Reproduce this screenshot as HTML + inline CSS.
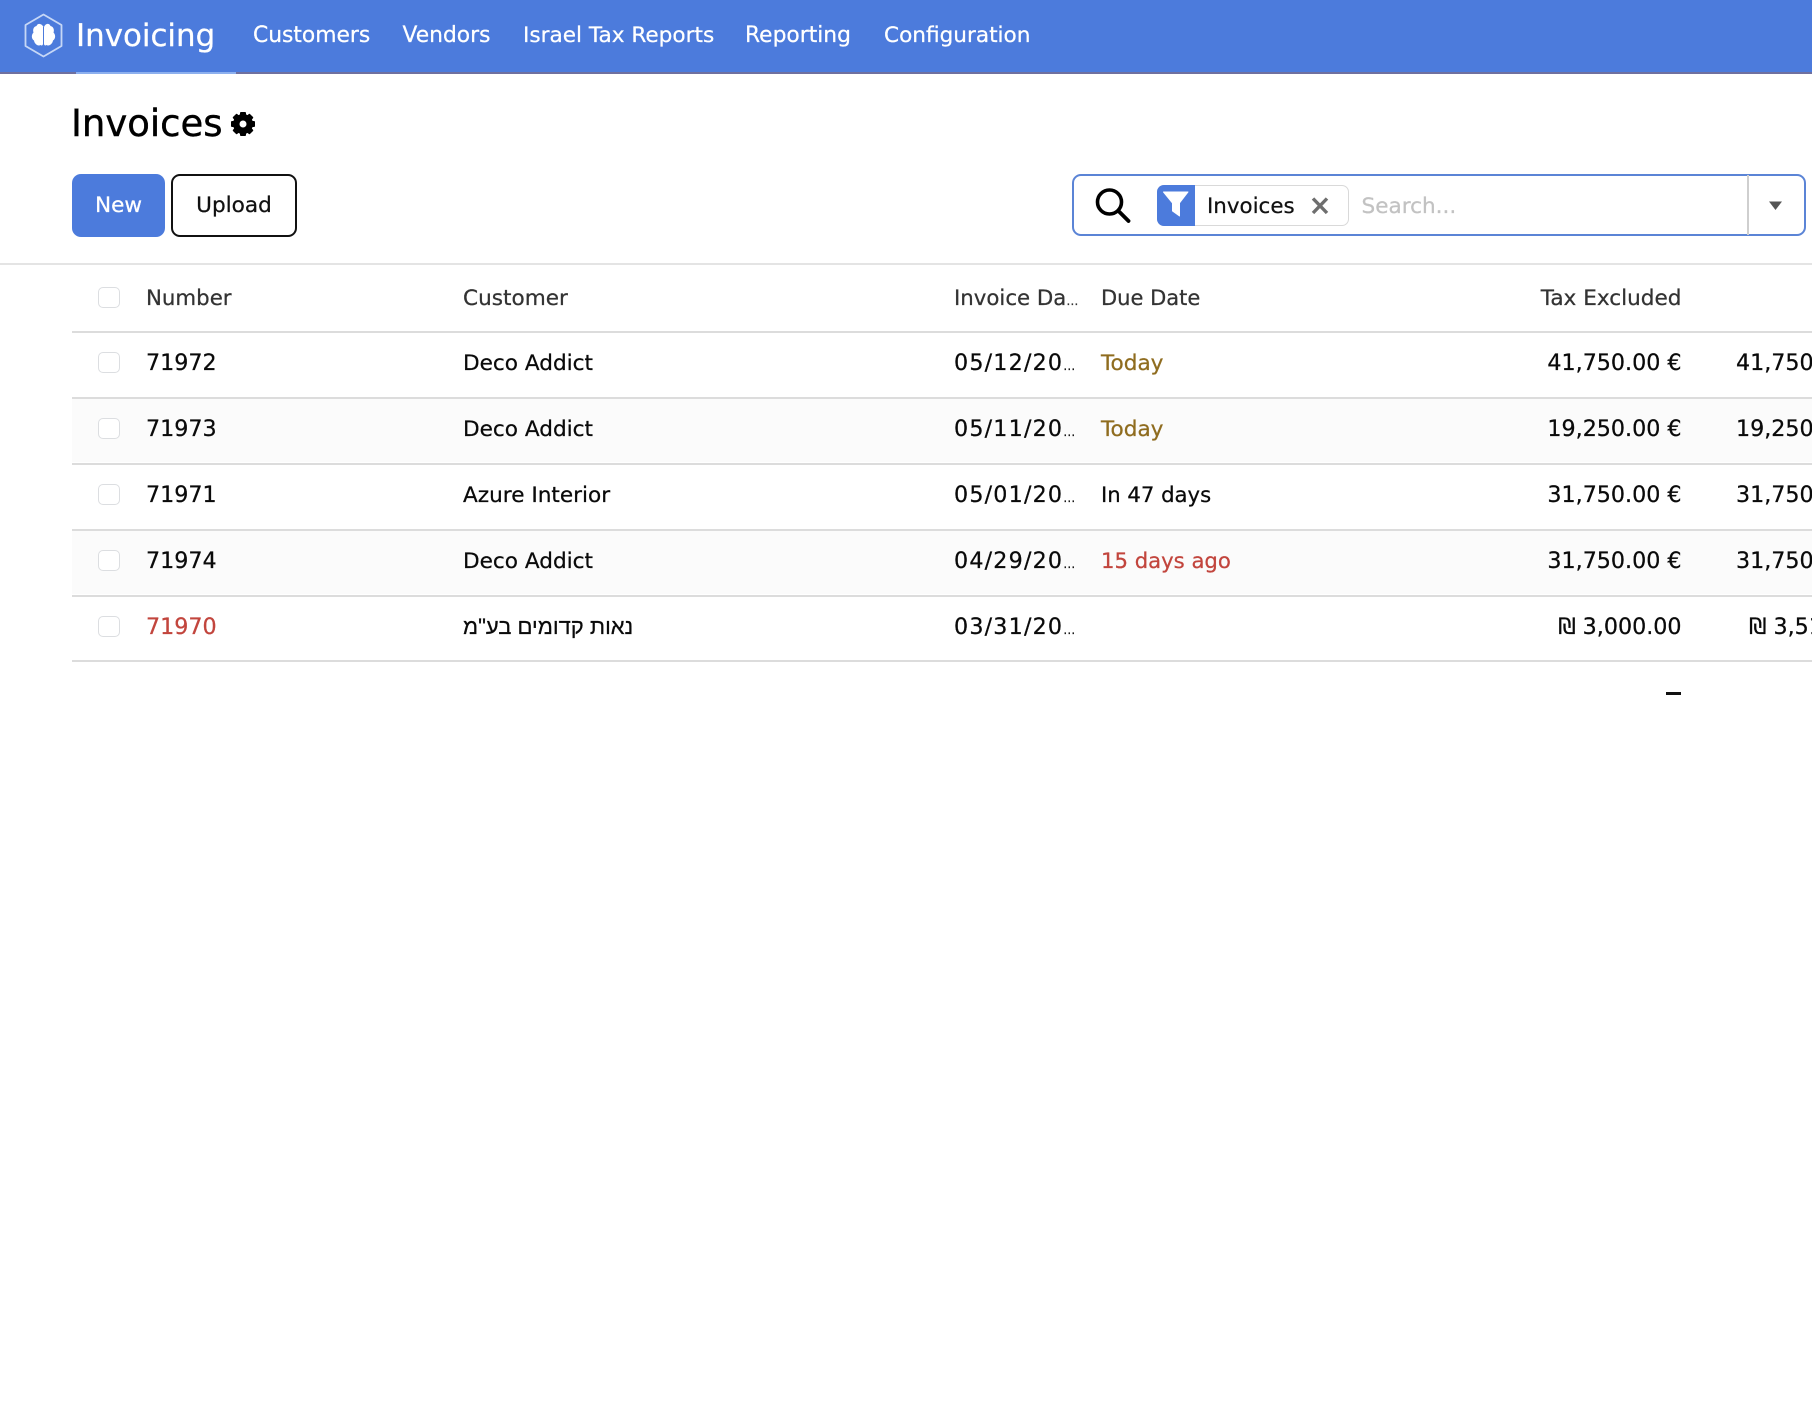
<!DOCTYPE html>
<html lang="en">
<head>
<meta charset="utf-8">
<title>Invoices</title>
<style>
html,body{margin:0;padding:0;background:#fff}
#p{position:relative;width:1812px;height:1405px;overflow:hidden;background:#fff;font-family:"DejaVu Sans","Liberation Sans",sans-serif;font-size:21.6px;color:#0a0a0a;-webkit-text-stroke:.25px currentColor}
#p div,#p span.a{position:absolute}
.t{white-space:nowrap;line-height:30px;height:30px}
.r{white-space:nowrap;line-height:30px;height:30px;text-align:right}
.n{font-size:22.2px}
.d{letter-spacing:1.2px}
.e{font-size:12px;letter-spacing:0}
.nav{color:#fff;font-size:21.8px;top:21px}
.hd{color:#333;top:284px}
.ln{left:72px;right:0;height:2px;background:#dcdcdc}
.cb{left:98px;width:20px;height:19px;border:1.500px solid #dcdee1;border-radius:5px;background:#fff}
.alt{left:72px;right:0;height:64px;background:#fbfbfb}
svg{position:absolute;overflow:visible}
</style>
</head>
<body>
<div id="p">
  <div style="left:0;top:0;width:1812px;height:72px;background:#4c7bdc"></div>
  <div style="left:0;top:72px;width:1812px;height:1.500px;background:#6f709f"></div>
  <div style="left:76px;top:72px;width:160px;height:1.500px;background:#8db0ee"></div>

  <svg style="left:0;top:0" width="100" height="72" viewBox="0 0 100 72">
    <path d="M43.500 14.500 L61.500 25 L61.500 46 L43.500 56.500 L25.500 46 L25.500 25 Z" fill="none" stroke="#c6d7f6" stroke-width="1.800" stroke-linejoin="round"/>
    <path d="M43.500 27 C41.500 23 37.500 23 36.500 26 C33.500 26.500 32.500 30 33.500 32.500 C31 35 31.500 39 34 40.500 C34.500 44 38 46.500 40.500 45 C41.500 46 42.800 45.500 43 44 V27 Z M44 27 C45.500 23 49.500 23 50.500 26 C53.500 26.500 54.500 30 53.500 32.500 C56 35 55.500 39 53 40.500 C52.500 44 49 46.500 46.500 45 C45.500 46 44.200 45.500 44 44 Z" fill="#fff"/>
  </svg>
  <div class="t" style="left:76px;top:19px;color:#fff;font-size:30.900px;line-height:34px;height:34px">Invoicing</div>
  <div class="t nav" style="left:253px">Customers</div>
  <div class="t nav" style="left:402.500px">Vendors</div>
  <div class="t nav" style="left:523px;font-size:21.600px">Israel Tax Reports</div>
  <div class="t nav" style="left:745px">Reporting</div>
  <div class="t nav" style="left:884px;font-size:21.600px">Configuration</div>

  <div class="t" style="left:71px;top:102px;font-size:37px;line-height:44px;height:44px;color:#000;-webkit-text-stroke:.4px #000">Invoices</div>
  <svg style="left:229px;top:110px" width="28" height="28" viewBox="0 0 28 28">
    <g fill="#000">
      <rect x="11" y="2" width="6" height="24" rx="1"/>
      <rect x="11" y="2" width="6" height="24" rx="1" transform="rotate(45 14 14)"/>
      <rect x="11" y="2" width="6" height="24" rx="1" transform="rotate(90 14 14)"/>
      <rect x="11" y="2" width="6" height="24" rx="1" transform="rotate(135 14 14)"/>
    </g>
    <circle cx="14" cy="14" r="7.500" fill="none" stroke="#000" stroke-width="5"/>
    <circle cx="14" cy="14" r="3.500" fill="#fff"/>
  </svg>

  <div style="left:72px;top:174px;width:93px;height:63px;background:#4c7bdc;border-radius:9px;color:#fff;text-align:center;line-height:64px;font-size:21.600px">New</div>
  <div style="left:171px;top:174px;width:122px;height:59px;border:2px solid #111;border-radius:9px;background:#fff;color:#111;text-align:center;line-height:60px;font-size:21.600px">Upload</div>

  <div style="left:1072px;top:174px;width:730px;height:58px;border:2px solid #5b84d6;border-radius:9px;background:#fff"></div>
  <div style="left:1747px;top:175px;width:1.500px;height:60px;background:#cfcfcf"></div>
  <svg style="left:1090px;top:182px" width="46" height="46" viewBox="0 0 46 46">
    <circle cx="19.500" cy="20" r="12" fill="none" stroke="#000" stroke-width="3.600"/>
    <path d="M28.500 29 L38.500 39" stroke="#000" stroke-width="3.800" stroke-linecap="round"/>
  </svg>
  <div style="left:1157px;top:185px;width:190px;height:39px;border:1.500px solid #d9d9d9;border-radius:7px;background:#fff"></div>
  <div style="left:1157px;top:185px;width:38px;height:41px;background:#4c7bdc;border-radius:7px 0 0 7px"></div>
  <svg style="left:1157px;top:185px" width="38" height="41" viewBox="0 0 38 41">
    <path d="M6.500 7 H31 L22.500 18 V31 L15.500 26 V18 Z" fill="#fff" stroke="#fff" stroke-width="1" stroke-linejoin="round"/>
  </svg>
  <div class="t" style="left:1207px;top:191.500px;font-size:21.400px;color:#111">Invoices</div>
  <svg style="left:1310px;top:196px" width="20" height="20" viewBox="0 0 20 20">
    <path d="M3 2.500 L17 17 M17 2.500 L3 17" stroke="#6e6e6e" stroke-width="3.400"/>
  </svg>
  <div class="t" style="left:1361.500px;top:191.500px;font-size:21.600px;color:#c2c2c2">Search...</div>
  <svg style="left:1765px;top:198px" width="20" height="14" viewBox="0 0 20 14">
    <path d="M4 3.500 H17 L10.500 12 Z" fill="#555"/>
  </svg>

  <div style="left:0;top:263px;width:1812px;height:2px;background:#e4e4e4"></div>

  <div class="alt" style="top:398px"></div>
  <div class="alt" style="top:530px"></div>
  <div class="ln" style="top:331px"></div>
  <div class="ln" style="top:397px"></div>
  <div class="ln" style="top:463px"></div>
  <div class="ln" style="top:529px"></div>
  <div class="ln" style="top:595px"></div>
  <div class="ln" style="top:660px"></div>

  <div class="cb" style="top:287px"></div>
  <div class="cb" style="top:352px"></div>
  <div class="cb" style="top:418px"></div>
  <div class="cb" style="top:484px"></div>
  <div class="cb" style="top:550px"></div>
  <div class="cb" style="top:616px"></div>

  <div class="t hd" style="left:146px;font-size:21.300px">Number</div>
  <div class="t hd" style="left:463px">Customer</div>
  <div class="t hd" style="left:954px;font-size:21.300px">Invoice Da<span class="e">…</span></div>
  <div class="t hd" style="left:1101px;top:283px;font-size:21px">Due Date</div>
  <div class="r hd" style="right:130.500px">Tax Excluded</div>

  <div class="t n" style="left:146px;top:348px">71972</div>
  <div class="t" style="left:463px;top:349px">Deco Addict</div>
  <div class="t n d" style="left:954px;top:348px">05/12/20<span class="e">…</span></div>
  <div class="t" style="left:1101px;top:349px;color:#8f6c1f">Today</div>
  <div class="r n" style="right:130.500px;top:348px">41,750.00 €</div>
  <div class="t n" style="left:1736px;top:348px">41,750.00 €</div>

  <div class="t n" style="left:146px;top:414px">71973</div>
  <div class="t" style="left:463px;top:415px">Deco Addict</div>
  <div class="t n d" style="left:954px;top:414px">05/11/20<span class="e">…</span></div>
  <div class="t" style="left:1101px;top:415px;color:#8f6c1f">Today</div>
  <div class="r n" style="right:130.500px;top:414px">19,250.00 €</div>
  <div class="t n" style="left:1736px;top:414px">19,250.00 €</div>

  <div class="t n" style="left:146px;top:480px">71971</div>
  <div class="t" style="left:463px;top:481px">Azure Interior</div>
  <div class="t n d" style="left:954px;top:480px">05/01/20<span class="e">…</span></div>
  <div class="t" style="left:1101px;top:480px;font-size:21.200px">In 47 days</div>
  <div class="r n" style="right:130.500px;top:480px">31,750.00 €</div>
  <div class="t n" style="left:1736px;top:480px">31,750.00 €</div>

  <div class="t n" style="left:146px;top:546px">71974</div>
  <div class="t" style="left:463px;top:547px">Deco Addict</div>
  <div class="t n d" style="left:954px;top:546px">04/29/20<span class="e">…</span></div>
  <div class="t" style="left:1101px;top:546px;font-size:21.200px;color:#c2453d">15 days ago</div>
  <div class="r n" style="right:130.500px;top:546px">31,750.00 €</div>
  <div class="t n" style="left:1736px;top:546px">31,750.00 €</div>

  <div class="t n" style="left:146px;top:612px;color:#c2453d">71970</div>
  <div class="t" style="left:463px;top:612px;font-family:'Liberation Sans','DejaVu Sans',sans-serif;font-size:22px">נאות קדומים בע"מ</div>
  <div class="t n d" style="left:954px;top:612px">03/31/20<span class="e">…</span></div>
  <div class="r n" style="right:130.500px;top:612px">₪ 3,000.00</div>
  <div class="t n" style="left:1749px;top:612px">₪ 3,510.00</div>

  <div style="left:1666px;top:692px;width:15px;height:2.500px;background:#111"></div>
</div>
</body>
</html>
